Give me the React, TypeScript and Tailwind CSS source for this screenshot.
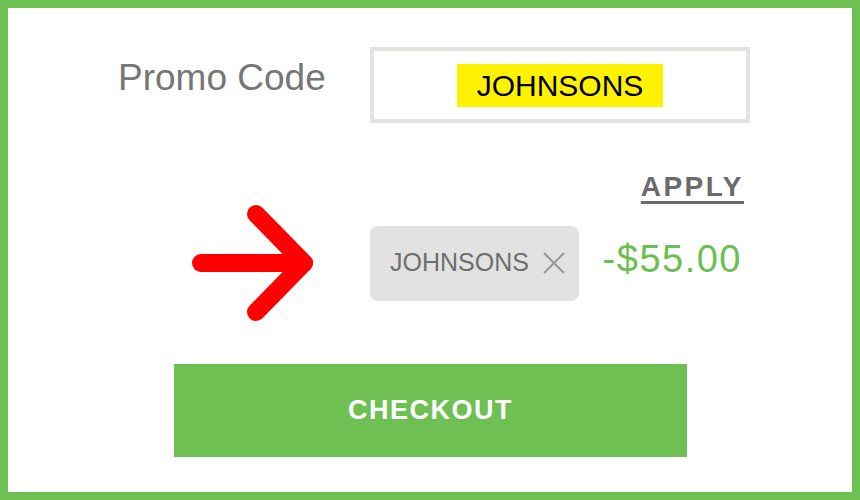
export default function App() {
  return (
    <div
      className="w-[860px] h-[500px] border-8 border-[#6fc053] bg-white box-border"
      style={{ fontFamily: '"Liberation Sans", Arial, sans-serif' }}
    >
      <div className="pt-[39px] pl-[110px] w-[742px]">
        {/* promo code input */}
        <div className="flex items-start">
          <label className="w-[252px] mt-[12px] text-[37px] leading-[37px] text-[#767676]">
            Promo Code
          </label>
          <div className="w-[380px] h-[76px] border-4 border-[#e4e4e0] flex items-center justify-center">
            <span className="bg-[#fff200] px-[20px] h-[43px] leading-[43px] text-[30px] text-black">
              JOHNSONS
            </span>
          </div>
        </div>

        <div className="mt-[50px] flex justify-end pr-[6px]">
          <a className="text-[28px] leading-[28px] font-bold tracking-[2.5px] text-[#6b6b6b] underline decoration-[3px] underline-offset-[5px]">
            APPLY
          </a>
        </div>

        {/* applied code */}
        <div className="mt-[3px] flex items-center">
          <div className="w-[252px]">
            <svg
              className="ml-[66px]"
              width="132"
              height="118"
              viewBox="0 0 132 118"
              fill="none"
              stroke="#ff0000"
              strokeWidth="18"
              strokeLinecap="round"
              strokeLinejoin="round"
            >
              <path d="M17 59H120" />
              <path d="M72 10L120 59L72 108" />
            </svg>
          </div>
          <div className="w-[209px] h-[75px] rounded-[8px] bg-[#e2e2e2] flex items-center pl-[20px] gap-[14px]">
            <span className="text-[25px] text-[#6e6e6e]">JOHNSONS</span>
            <svg width="22" height="22" viewBox="0 0 22 22" stroke="#9b9b9b" strokeWidth="2.2">
              <path d="M1 1L21 21M21 1L1 21" />
            </svg>
          </div>
          <div className="flex-1 text-right pr-[8px] mb-[9px] text-[38px] leading-[38px] tracking-[1.5px] text-[#6cbf4f]">
            -$55.00
          </div>
        </div>
      </div>

      <button className="ml-[166px] mt-[42px] w-[513px] h-[93px] bg-[#6fc053] text-white text-[27px] font-bold tracking-[1.5px]">
        CHECKOUT
      </button>
    </div>
  );
}
